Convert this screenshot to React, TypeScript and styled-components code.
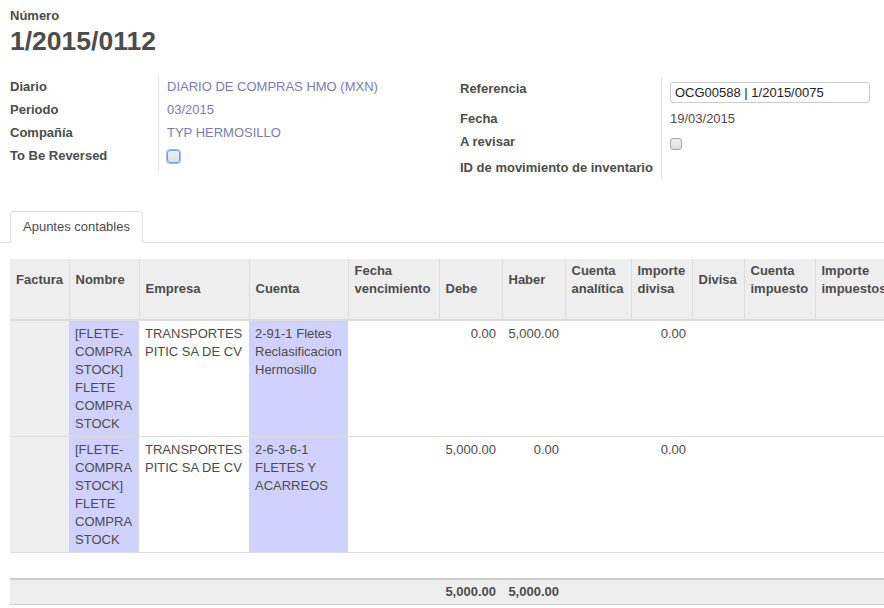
import React from "react";
import styled, { createGlobalStyle } from "styled-components";

const GlobalStyle = createGlobalStyle`
  html, body { margin: 0; padding: 0; background: #fff; overflow: hidden; }
  body {
    font-family: "Liberation Sans", Arial, Helvetica, sans-serif;
    font-size: 13px;
    line-height: 18px;
    color: #4c4c4c;
  }
  * { box-sizing: border-box; }
`;

const Sheet = styled.div`
  width: 884px;
  padding-top: 7px;
`;

const TitleBlock = styled.div`
  padding-left: 10px;
`;

const SmallLabel = styled.div`
  font-weight: bold;
  line-height: 18px;
`;

const Title = styled.h1`
  margin: 0;
  font-size: 26.5px;
  line-height: 32px;
  font-weight: bold;
  color: #4c4c4c;
`;

const Groups = styled.div`
  display: flex;
  padding-left: 10px;
  margin-top: 19px;
`;

const Group = styled.div<{ $top: number; $w?: number }>`
  flex: ${(p) => (p.$w ? `0 0 ${p.$w}px` : "1 1 auto")};
  display: flex;
  flex-direction: column;
  margin-top: ${(p) => p.$top}px;
`;

const FieldRow = styled.div<{ $h: number; $labelW: number }>`
  display: grid;
  grid-template-columns: ${(p) => p.$labelW}px 1fr;
  height: ${(p) => p.$h}px;
`;

const FieldLabel = styled.div<{ $pt: number }>`
  font-weight: bold;
  padding-top: ${(p) => p.$pt}px;
  border-right: 1px solid #e2e2e2;
`;

const FieldValue = styled.div<{ $pt: number }>`
  padding-left: 8px;
  padding-top: ${(p) => p.$pt}px;
`;

const LinkValue = styled.span`
  color: #7c7bad;
`;

const TextInput = styled.input`
  width: 200px;
  height: 21px;
  border: 1px solid #ccc;
  border-radius: 3px;
  padding: 0 4px;
  font-family: "Liberation Sans", Arial, sans-serif;
  font-size: 13px;
  color: #222;
  background: #fff;
  outline: none;
`;

const Check = styled.span<{ $focus?: boolean }>`
  display: inline-block;
  width: ${(p) => (p.$focus ? 13 : 12)}px;
  height: ${(p) => (p.$focus ? 13 : 12)}px;
  border: 1px solid ${(p) => (p.$focus ? "#6fa0e6" : "#a5a5a5")};
  border-radius: 3px;
  background: linear-gradient(#f0f0f0, #dedede);
  box-shadow: ${(p) => (p.$focus ? "0 0 0 1px #9fc0f2" : "none")};
  vertical-align: top;
`;

const TabsNav = styled.div`
  margin-top: 31px;
  border-bottom: 1px solid #ddd;
  padding-left: 10px;
  display: flex;
  height: 32px;
`;

const Tab = styled.div`
  height: 32px;
  padding: 6px 12px;
  border: 1px solid #ddd;
  border-bottom-color: #fff;
  border-radius: 4px 4px 0 0;
  background: #fff;
  line-height: 18px;
`;

const TableWrap = styled.div`
  margin-top: 16px;
  padding-left: 10px;
  width: 1100px;
`;

const Table = styled.table`
  border-collapse: collapse;
  table-layout: fixed;
  width: 1000px;
`;

const Th = styled.th<{ $w: number; $v: "middle" | "bottom"; $first?: boolean }>`
  width: ${(p) => p.$w}px;
  background: #eee;
  font-weight: bold;
  text-align: left;
  vertical-align: ${(p) => p.$v};
  padding: 3px 6px 21px;
  line-height: 18px;
  border-left: ${(p) => (p.$first ? "none" : "1px solid #ddd")};
  border-bottom: 2px solid #ddd;
  white-space: normal;
`;

type Tone = "plain" | "grey" | "purple";

const Td = styled.td<{ $tone?: Tone; $num?: boolean }>`
  vertical-align: top;
  padding: 4px 6px 3px;
  line-height: 18px;
  border-bottom: 1px solid #ddd;
  text-align: ${(p) => (p.$num ? "right" : "left")};
  background: ${(p) =>
    p.$tone === "grey" ? "#eee" : p.$tone === "purple" ? "#d1d1ff" : "#fff"};
`;

const SpacerTd = styled.td`
  height: 26px;
  padding: 0;
`;

const FootTd = styled.td<{ $num?: boolean }>`
  background: #eee;
  border-top: 2px solid #ccc;
  border-bottom: 1px solid #ccc;
  height: 26px;
  padding: 3px 6px 2px;
  font-weight: bold;
  text-align: ${(p) => (p.$num ? "right" : "left")};
`;

const columns: { label: React.ReactNode; w: number; v: "middle" | "bottom" }[] = [
  { label: "Factura", w: 59, v: "middle" },
  { label: "Nombre", w: 70, v: "middle" },
  { label: "Empresa", w: 110, v: "bottom" },
  { label: "Cuenta", w: 99, v: "bottom" },
  { label: "Fecha vencimiento", w: 91, v: "bottom" },
  { label: "Debe", w: 63, v: "bottom" },
  { label: "Haber", w: 63, v: "middle" },
  { label: "Cuenta analítica", w: 66, v: "bottom" },
  { label: "Importe divisa", w: 61, v: "bottom" },
  { label: "Divisa", w: 52, v: "middle" },
  { label: "Cuenta impuesto", w: 71, v: "bottom" },
  { label: "Importe impuestos", w: 82, v: "bottom" },
  { label: "", w: 113, v: "bottom" },
];

const rows = [
  {
    nombre: "[FLETE-COMPRA STOCK] FLETE COMPRA STOCK",
    empresa: "TRANSPORTES PITIC SA DE CV",
    cuenta: "2-91-1 Fletes Reclasificacion Hermosillo",
    debe: "0.00",
    haber: "5,000.00",
    divisa: "0.00",
  },
  {
    nombre: "[FLETE-COMPRA STOCK] FLETE COMPRA STOCK",
    empresa: "TRANSPORTES PITIC SA DE CV",
    cuenta: "2-6-3-6-1 FLETES Y ACARREOS",
    debe: "5,000.00",
    haber: "0.00",
    divisa: "0.00",
  },
];

export default function App() {
  return (
    <>
      <GlobalStyle />
      <Sheet>
        <TitleBlock>
          <SmallLabel>Número</SmallLabel>
          <Title>1/2015/0112</Title>
        </TitleBlock>

        <Groups>
          <Group $top={0} $w={450}>
            <FieldRow $h={23} $labelW={149}>
              <FieldLabel $pt={2}>Diario</FieldLabel>
              <FieldValue $pt={2}>
                <LinkValue>DIARIO DE COMPRAS HMO (MXN)</LinkValue>
              </FieldValue>
            </FieldRow>
            <FieldRow $h={23} $labelW={149}>
              <FieldLabel $pt={2}>Periodo</FieldLabel>
              <FieldValue $pt={2}>
                <LinkValue>03/2015</LinkValue>
              </FieldValue>
            </FieldRow>
            <FieldRow $h={23} $labelW={149}>
              <FieldLabel $pt={2}>Compañía</FieldLabel>
              <FieldValue $pt={2}>
                <LinkValue>TYP HERMOSILLO</LinkValue>
              </FieldValue>
            </FieldRow>
            <FieldRow $h={26} $labelW={149}>
              <FieldLabel $pt={2}>To Be Reversed</FieldLabel>
              <FieldValue $pt={5}>
                <Check $focus />
              </FieldValue>
            </FieldRow>
          </Group>

          <Group $top={2}>
            <FieldRow $h={30} $labelW={202}>
              <FieldLabel $pt={2}>Referencia</FieldLabel>
              <FieldValue $pt={4}>
                <TextInput readOnly value="OCG00588 | 1/2015/0075" />
              </FieldValue>
            </FieldRow>
            <FieldRow $h={23} $labelW={202}>
              <FieldLabel $pt={2}>Fecha</FieldLabel>
              <FieldValue $pt={2}>19/03/2015</FieldValue>
            </FieldRow>
            <FieldRow $h={25} $labelW={202}>
              <FieldLabel $pt={2}>A revisar</FieldLabel>
              <FieldValue $pt={7}>
                <Check />
              </FieldValue>
            </FieldRow>
            <FieldRow $h={24} $labelW={202}>
              <FieldLabel $pt={3}>ID de movimiento de inventario</FieldLabel>
              <FieldValue $pt={3}></FieldValue>
            </FieldRow>
          </Group>
        </Groups>

        <TabsNav>
          <Tab>Apuntes contables</Tab>
        </TabsNav>

        <TableWrap>
          <Table>
            <thead>
              <tr>
                {columns.map((c, i) => (
                  <Th key={i} $w={c.w} $v={c.v} $first={i === 0}>
                    {c.label}
                  </Th>
                ))}
              </tr>
            </thead>
            <tbody>
              {rows.map((r, i) => (
                <tr key={i}>
                  <Td $tone="grey"></Td>
                  <Td $tone="purple">{r.nombre}</Td>
                  <Td>{r.empresa}</Td>
                  <Td $tone="purple">{r.cuenta}</Td>
                  <Td></Td>
                  <Td $num>{r.debe}</Td>
                  <Td $num>{r.haber}</Td>
                  <Td></Td>
                  <Td $num>{r.divisa}</Td>
                  <Td></Td>
                  <Td></Td>
                  <Td></Td>
                  <Td></Td>
                </tr>
              ))}
              <tr>
                <SpacerTd colSpan={13} />
              </tr>
            </tbody>
            <tfoot>
              <tr>
                <FootTd colSpan={5}></FootTd>
                <FootTd $num>5,000.00</FootTd>
                <FootTd $num>5,000.00</FootTd>
                <FootTd colSpan={6}></FootTd>
              </tr>
            </tfoot>
          </Table>
        </TableWrap>
      </Sheet>
    </>
  );
}
